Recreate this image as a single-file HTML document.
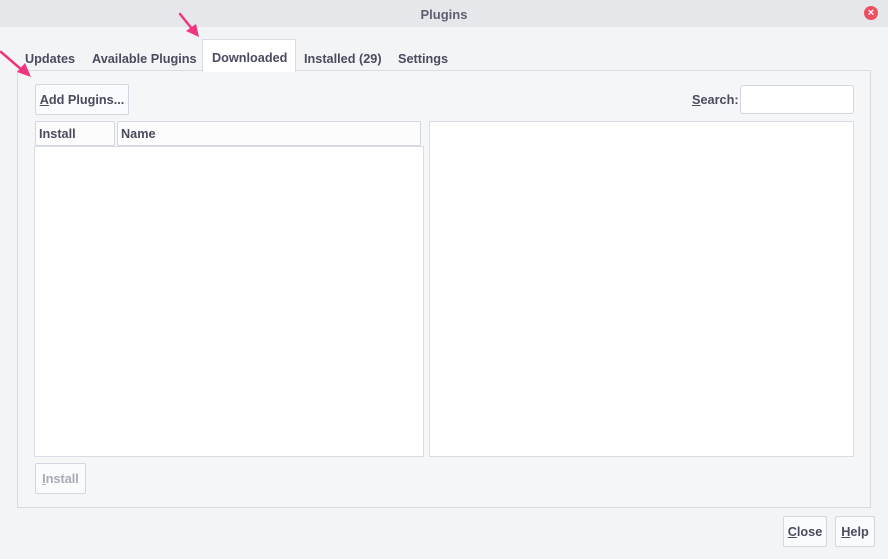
<!DOCTYPE html>
<html><head><style>
*{margin:0;padding:0;box-sizing:border-box}
body{width:888px;height:559px;background:#f3f4f6;font-family:"Liberation Sans",sans-serif;font-size:12.7px;font-weight:bold;color:#4b4b5f;position:relative;overflow:hidden}
.a{position:absolute}
.title{left:0;top:0;width:888px;height:27px;background:#e6e7eb;text-align:center;line-height:29px;font-size:13px;color:#5e6070}
.btn{position:absolute;border:1px solid #d3d7e2;border-radius:2px;background:#fafbfc;text-align:center}
.box{position:absolute;background:#fff;border:1px solid #d9dce3}
u{text-decoration:underline}
</style></head><body>
<div class="a title">Plugins</div>
<div class="a" style="left:864px;top:6px;width:14px;height:14px;border-radius:50%;background:#ef5060;color:#fff;font-size:11px;line-height:14px;text-align:center">×</div>
<div class="a" style="left:17px;top:70px;width:854px;height:438px;border:1px solid #d9dce3;background:#f3f4f6"></div>
<div class="a" style="left:22px;top:71px;width:847px;height:435px;background:#f5f6f8"></div>
<svg class="a" style="left:0;top:0" width="300" height="90"><g stroke="#f0357f" stroke-width="2.5" fill="#f0357f" stroke-linecap="round"><line x1="180" y1="14" x2="193" y2="30"/><polygon points="199,37 186,31 196,24" stroke="none"/><line x1="1" y1="52" x2="22" y2="70"/><polygon points="31,77 17,72 25,63" stroke="none"/></g></svg>
<div class="a" style="left:25px;top:52px">Updates</div>
<div class="a" style="left:92px;top:52px">Available Plugins</div>
<div class="a" style="left:202px;top:39px;width:94px;height:33px;background:#fff;border:1px solid #d9dce3;border-bottom:none"></div>
<div class="a" style="left:212px;top:51px">Downloaded</div>
<div class="a" style="left:304px;top:52px">Installed (29)</div>
<div class="a" style="left:398px;top:52px">Settings</div>
<div class="btn" style="left:35px;top:84px;width:94px;height:31px;line-height:30px"><u>A</u>dd Plugins...</div>
<div class="a" style="left:692px;top:93px"><u>S</u>earch:</div>
<div class="box" style="left:740px;top:85px;width:114px;height:29px;border-radius:3px;border-color:#d3d7e2"></div>
<div class="btn" style="left:35px;top:121px;width:80px;height:25px;line-height:24px;text-align:left;padding-left:3px;background:#fcfcfd">Install</div>
<div class="btn" style="left:117px;top:121px;width:304px;height:25px;line-height:24px;text-align:left;padding-left:3px;background:#fcfcfd">Name</div>
<div class="box" style="left:34px;top:146px;width:390px;height:311px"></div>
<div class="box" style="left:429px;top:121px;width:425px;height:336px"></div>
<div class="btn" style="left:35px;top:463px;width:51px;height:31px;line-height:30px;color:#a8abb5"><u>I</u>nstall</div>
<div class="btn" style="left:783px;top:516px;width:44px;height:31px;line-height:30px"><u>C</u>lose</div>
<div class="btn" style="left:835px;top:516px;width:40px;height:31px;line-height:30px"><u>H</u>elp</div>
</body></html>
